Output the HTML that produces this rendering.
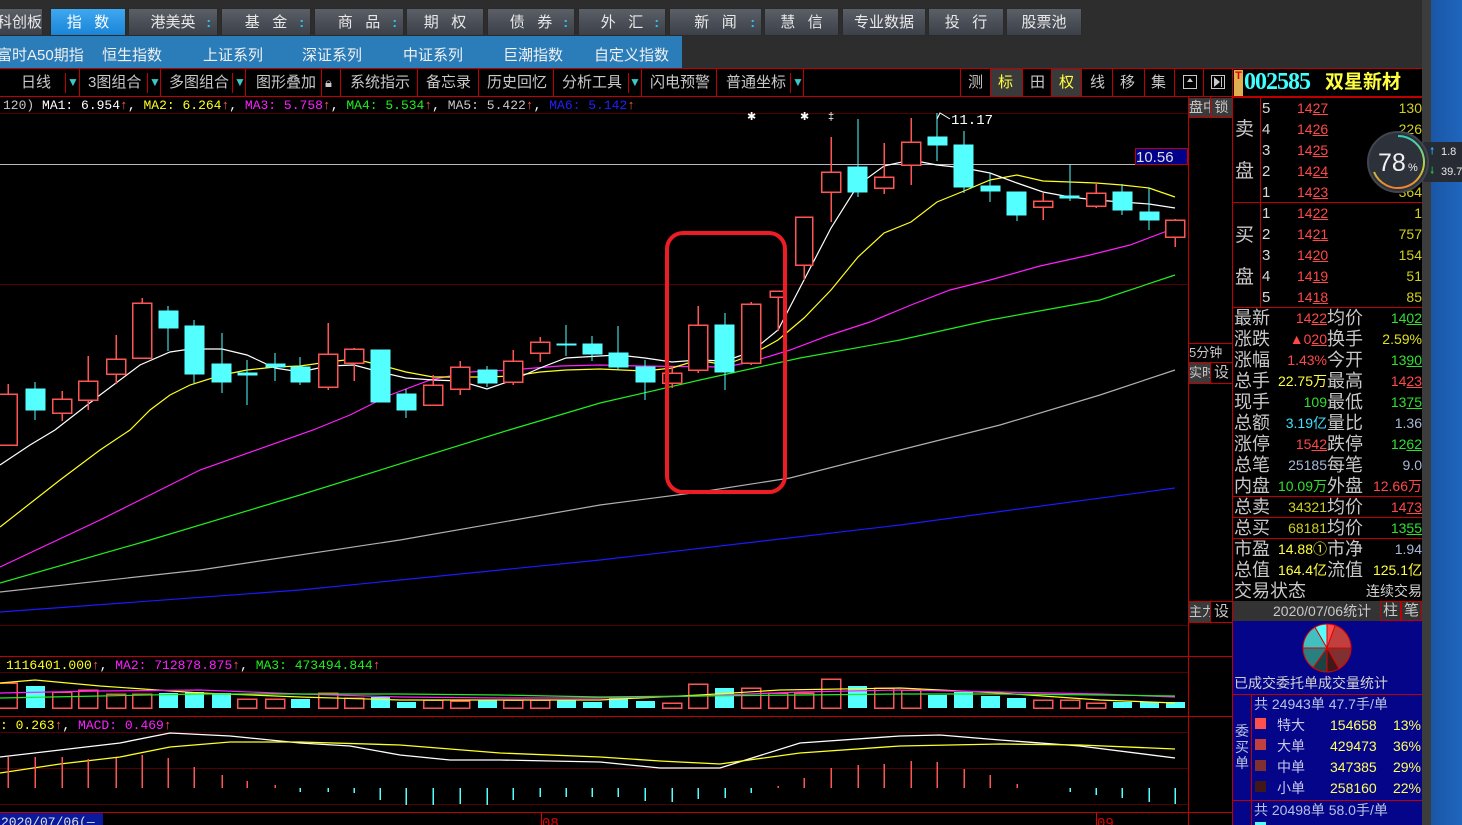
<!DOCTYPE html>
<html><head><meta charset="utf-8"><style>
*{margin:0;padding:0;box-sizing:border-box}
body{width:1462px;height:825px;overflow:hidden;background:#000;position:relative;font-family:"Liberation Sans","WenQuanYi Zen Hei","Noto Sans CJK SC",sans-serif;color:#c8c8c8}
.a{position:absolute;white-space:nowrap}
.tab{position:absolute;top:8px;height:28px;background:linear-gradient(#5a5f68,#3c4048);border:1px solid #2a2a2a;color:#e8e8e8;font-size:15px;line-height:27px;text-align:center}
.tab i{position:absolute;right:6px;top:0px;color:#2ac8ff;font-style:normal;font-weight:bold;font-size:14px}
.r2{position:absolute;top:44px;color:#f0f0f0;font-size:15px}
.tb{position:absolute;top:68px;height:29px;line-height:29px;font-size:15px;color:#c8c8c8}
.vl{position:absolute;width:1px;background:#c00000}
.ob{position:absolute;height:21px;line-height:21px;font-size:14px}
.cn{font-size:18px;color:#c8c8c8}
.row{position:absolute;left:1234px;width:188px;height:21px;line-height:21px}
.row span{position:absolute}
</style></head><body>
<div class="a" style="left:0;top:0;width:1422px;height:68px;background:#2d2d2d"></div>
<div class="a" style="left:1422px;top:0;width:9px;height:825px;background:#3c3c3c"></div>
<div class="a" style="left:1431px;top:0;width:31px;height:825px;background:linear-gradient(90deg,#1a56a6,#1f66bd)"></div>
<div class="tab" style="left:-4px;width:47px">科创板</div>
<div class="tab" style="left:50px;width:76px;background:linear-gradient(#3ea8f0,#1a84d8);color:#fff">指&nbsp;&nbsp;&nbsp;数</div>
<div class="tab" style="left:128px;width:90px">港美英<i>:</i></div>
<div class="tab" style="left:221px;width:90px">基&nbsp;&nbsp;&nbsp;金<i>:</i></div>
<div class="tab" style="left:314px;width:90px">商&nbsp;&nbsp;&nbsp;品<i>:</i></div>
<div class="tab" style="left:406px;width:78px">期&nbsp;&nbsp;&nbsp;权</div>
<div class="tab" style="left:487px;width:88px">债&nbsp;&nbsp;&nbsp;券<i>:</i></div>
<div class="tab" style="left:578px;width:88px">外&nbsp;&nbsp;&nbsp;汇<i>:</i></div>
<div class="tab" style="left:669px;width:93px">新&nbsp;&nbsp;&nbsp;闻<i>:</i></div>
<div class="tab" style="left:764px;width:75px">慧&nbsp;&nbsp;&nbsp;信</div>
<div class="tab" style="left:842px;width:84px">专业数据</div>
<div class="tab" style="left:928px;width:76px">投&nbsp;&nbsp;&nbsp;行</div>
<div class="tab" style="left:1006px;width:76px">股票池</div>
<div class="a" style="left:0;top:36px;width:682px;height:32px;background:#2b7dba"></div>
<div class="r2" style="left:-3px">富时A50期指</div>
<div class="r2" style="left:102px">恒生指数</div>
<div class="r2" style="left:203px">上证系列</div>
<div class="r2" style="left:302px">深证系列</div>
<div class="r2" style="left:403px">中证系列</div>
<div class="r2" style="left:503px">巨潮指数</div>
<div class="r2" style="left:594px">自定义指数</div>
<div class="a" style="left:0;top:68px;width:1422px;height:1px;background:#c00000"></div>
<div class="a" style="left:0;top:96px;width:1422px;height:1px;background:#c00000"></div>
<div class="tb" style="left:21px">日线</div><div class="tb" style="left:67px;color:#3cc8c8;font-size:12px">▼</div>
<div class="tb" style="left:88px">3图组合</div><div class="tb" style="left:149px;color:#3cc8c8;font-size:12px">▼</div>
<div class="tb" style="left:169px">多图组合</div><div class="tb" style="left:234px;color:#3cc8c8;font-size:12px">▼</div>
<div class="tb" style="left:256px">图形叠加</div><div class="tb" style="left:325px;font-size:13px">🔒︎</div>
<div class="tb" style="left:350px">系统指示</div>
<div class="tb" style="left:426px">备忘录</div>
<div class="tb" style="left:487px">历史回忆</div>
<div class="tb" style="left:562px">分析工具</div><div class="tb" style="left:629px;color:#3cc8c8;font-size:12px">▼</div>
<div class="tb" style="left:650px">闪电预警</div>
<div class="tb" style="left:726px">普通坐标</div><div class="tb" style="left:792px;color:#3cc8c8;font-size:12px">▼</div>
<div class="a" style="left:991px;top:69px;width:31px;height:27px;background:#3a3a3a"></div>
<div class="a" style="left:1052px;top:69px;width:29px;height:27px;background:#3a3a3a"></div>
<div class="tb" style="left:968px">测</div>
<div class="tb" style="left:998px;color:#ffff40">标</div>
<div class="tb" style="left:1030px">田</div>
<div class="tb" style="left:1059px;color:#ffff40">权</div>
<div class="tb" style="left:1090px">线</div>
<div class="tb" style="left:1120px">移</div>
<div class="tb" style="left:1151px">集</div>
<div class="a" style="left:1183px;top:75px;width:14px;height:14px;border:1px solid #c8c8c8"></div>
<div class="a" style="left:1187px;top:78px;width:0;height:0;border:3px solid transparent;border-bottom:4px solid #c8c8c8;border-top:0"></div>
<div class="a" style="left:1211px;top:75px;width:14px;height:14px;border:1px solid #c8c8c8"></div>
<div class="a" style="left:1214px;top:77px;width:0;height:0;border-top:5px solid transparent;border-bottom:5px solid transparent;border-left:6px solid #c8c8c8"></div>
<div class="a" style="left:1221px;top:77px;width:1px;height:10px;background:#c8c8c8"></div>
<div class="vl" style="left:65px;top:73px;height:20px"></div><div class="vl" style="left:147px;top:73px;height:20px"></div><div class="vl" style="left:232px;top:73px;height:20px"></div><div class="vl" style="left:628px;top:73px;height:20px"></div><div class="vl" style="left:790px;top:73px;height:20px"></div>
<div class="vl" style="left:79px;top:69px;height:27px"></div><div class="vl" style="left:160px;top:69px;height:27px"></div>
<div class="vl" style="left:245px;top:69px;height:27px"></div><div class="vl" style="left:321px;top:69px;height:27px"></div>
<div class="vl" style="left:340px;top:69px;height:27px"></div><div class="vl" style="left:417px;top:69px;height:27px"></div>
<div class="vl" style="left:478px;top:69px;height:27px"></div><div class="vl" style="left:553px;top:69px;height:27px"></div>
<div class="vl" style="left:641px;top:69px;height:27px"></div><div class="vl" style="left:716px;top:69px;height:27px"></div>
<div class="vl" style="left:803px;top:69px;height:27px"></div><div class="vl" style="left:960px;top:69px;height:27px"></div>
<div class="vl" style="left:990px;top:69px;height:27px"></div><div class="vl" style="left:1022px;top:69px;height:27px"></div>
<div class="vl" style="left:1051px;top:69px;height:27px"></div><div class="vl" style="left:1081px;top:69px;height:27px"></div>
<div class="vl" style="left:1112px;top:69px;height:27px"></div><div class="vl" style="left:1144px;top:69px;height:27px"></div>
<div class="vl" style="left:1174px;top:69px;height:27px"></div><div class="vl" style="left:1203px;top:69px;height:27px"></div>
<div class="vl" style="left:1232px;top:69px;height:756px"></div>
<div class="a" style="left:1234px;top:70px;width:9px;height:26px;background:#e0b050;color:#e00000;font-size:11px;font-weight:bold;text-align:center;line-height:12px">T</div>
<div class="a" style="left:1244px;top:68px;font-family:'Liberation Serif',serif;font-weight:bold;font-size:24px;color:#40ffff;line-height:29px;letter-spacing:-1px">002585</div>
<div class="a" style="left:1325px;top:68px;font-size:19px;color:#ffff40;line-height:29px;font-weight:bold">双星新材</div>

<svg class="a" style="left:0;top:0" width="1462" height="825">
<g shape-rendering="crispEdges">
<line x1="0" y1="113.5" x2="1188" y2="113.5" stroke="#500000"/>
<line x1="0" y1="284.5" x2="1188" y2="284.5" stroke="#500000"/>
<line x1="0" y1="164.5" x2="1188" y2="164.5" stroke="#b8b8b8"/>
<line x1="0" y1="625.5" x2="1188" y2="625.5" stroke="#500000"/>
<line x1="0" y1="656.5" x2="1232" y2="656.5" stroke="#c00000"/>
<line x1="0" y1="672.5" x2="1188" y2="672.5" stroke="#500000"/>
<line x1="0" y1="716.5" x2="1232" y2="716.5" stroke="#c00000"/>
<line x1="0" y1="732.5" x2="1188" y2="732.5" stroke="#500000"/>
<line x1="0" y1="768.5" x2="1188" y2="768.5" stroke="#500000"/>
<line x1="0" y1="804.5" x2="1188" y2="804.5" stroke="#500000"/>
<line x1="0" y1="812.5" x2="1232" y2="812.5" stroke="#c00000"/>
<line x1="1188.5" y1="97" x2="1188.5" y2="825" stroke="#c00000"/>
</g>
<g fill="none" stroke-width="1.2">
<polyline stroke="#1a1aff" points="0,612 300,590 600,560 900,525 1175,488"/>
<polyline stroke="#b0b0b0" points="0,592 200,570 400,540 600,505 700,492 790,478 900,450 1000,425 1100,395 1175,370"/>
<polyline stroke="#20ee20" points="0,583 150,540 300,495 509,430 600,403 700,380 800,358 900,340 990,320 1100,300 1175,275"/>
<polyline stroke="#ff20ff" points="0,567 100,520 200,470 313,430 350,415 390,395 430,380 470,372 510,370 560,366 600,365 640,366 725,367 751,362 790,350 830,335 870,322 911,305 950,290 990,280 1040,266 1090,255 1130,245 1175,228"/>
<polyline stroke="#ffff20" points="0,527 60,480 100,450 130,430 150,410 170,395 190,385 222,375 247,370 275,367 300,366 328,362 354,359 380,365 406,372 433,377 487,377 513,376 540,372 566,370 600,369 645,371 672,368 698,360 725,365 751,355 778,340 804,318 831,290 858,257 884,233 911,222 937,202 964,191 990,180 1017,175 1043,181 1070,182 1096,183 1122,185 1149,188 1175,197"/>
<polyline stroke="#ffffff" points="0,465 30,445 55,430 100,395 140,365 170,352 190,349 222,349 247,355 275,368 300,372 328,366 354,365 380,372 406,378 433,380 460,381 487,389 513,380 540,368 566,358 600,356 618,355 645,358 672,362 698,360 725,361 751,352 778,330 804,280 831,228 858,185 884,166 911,160 937,165 964,168 990,173 1017,183 1043,192 1070,197 1096,200 1122,202 1149,204 1175,208"/>
</g>
<g shape-rendering="crispEdges" stroke-width="1.5">
<g stroke="#ff5454" fill="#000">
<line x1="8" y1="384" x2="8" y2="445"/><rect x="-2" y="394" width="19" height="51"/>
<line x1="62" y1="391" x2="62" y2="421"/><rect x="52.5" y="399" width="19" height="14"/>
<line x1="88" y1="356" x2="88" y2="410"/><rect x="78.5" y="381" width="19" height="19"/>
<line x1="116" y1="335" x2="116" y2="384"/><rect x="106.5" y="359" width="19" height="15"/>
<line x1="142" y1="298" x2="142" y2="358"/><rect x="132.5" y="303" width="19" height="55"/>
<line x1="328" y1="323" x2="328" y2="390"/><rect x="318.5" y="354" width="19" height="33"/>
<line x1="354" y1="348" x2="354" y2="381"/><rect x="344.5" y="349" width="19" height="14"/>
<line x1="433" y1="375" x2="433" y2="405"/><rect x="423.5" y="385" width="19" height="20"/>
<line x1="460" y1="361" x2="460" y2="395"/><rect x="450.5" y="367" width="19" height="22"/>
<line x1="513" y1="350" x2="513" y2="385"/><rect x="503.5" y="361" width="19" height="21"/>
<line x1="540" y1="337" x2="540" y2="362"/><rect x="530.5" y="342" width="19" height="11"/>
<line x1="672" y1="366" x2="672" y2="388"/><rect x="662.5" y="373" width="19" height="10"/>
<line x1="698" y1="306" x2="698" y2="373"/><rect x="688.5" y="325" width="19" height="45"/>
<line x1="751" y1="302" x2="751" y2="365"/><rect x="741.5" y="304" width="19" height="59"/>
<line x1="778" y1="291" x2="778" y2="331"/><rect x="770" y="291" width="16" height="6"/>
<line x1="804" y1="217" x2="804" y2="280"/><rect x="795.5" y="217" width="17" height="48"/>
<line x1="831" y1="137" x2="831" y2="222"/><rect x="821.5" y="172" width="19" height="20"/>
<line x1="884" y1="143" x2="884" y2="194"/><rect x="874.5" y="177" width="19" height="11"/>
<line x1="911" y1="118" x2="911" y2="185"/><rect x="901.5" y="142" width="19" height="23"/>
<line x1="1043" y1="193" x2="1043" y2="220"/><rect x="1033.5" y="201" width="19" height="6"/>
<line x1="1096" y1="183" x2="1096" y2="208"/><rect x="1086.5" y="193" width="19" height="13"/>
<line x1="1175" y1="219" x2="1175" y2="247"/><rect x="1165.5" y="220" width="19" height="17"/>
</g>
<g stroke="#54ffff" fill="#54ffff" stroke-width="1">
<line x1="35" y1="382" x2="35" y2="420"/><rect x="26" y="389" width="19" height="21"/>
<line x1="168" y1="306" x2="168" y2="351"/><rect x="159" y="311" width="19" height="17"/>
<line x1="194" y1="320" x2="194" y2="383"/><rect x="185" y="326" width="19" height="48"/>
<line x1="222" y1="333" x2="222" y2="393"/><rect x="212" y="364" width="19" height="18"/>
<line x1="247" y1="360" x2="247" y2="405"/><rect x="238" y="373" width="19" height="2"/>
<line x1="275" y1="353" x2="275" y2="381"/><rect x="266" y="364" width="19" height="3"/>
<line x1="300" y1="357" x2="300" y2="385"/><rect x="291" y="367" width="19" height="15"/>
<line x1="380" y1="350" x2="380" y2="402"/><rect x="371" y="350" width="19" height="52"/>
<line x1="406" y1="389" x2="406" y2="418"/><rect x="397" y="394" width="19" height="16"/>
<line x1="487" y1="366" x2="487" y2="387"/><rect x="478" y="370" width="19" height="13"/>
<line x1="566" y1="325" x2="566" y2="356"/><rect x="557" y="344" width="19" height="1"/>
<line x1="592" y1="336" x2="592" y2="361"/><rect x="583" y="344" width="19" height="10"/>
<line x1="618" y1="326" x2="618" y2="370"/><rect x="609" y="353" width="19" height="14"/>
<line x1="645" y1="360" x2="645" y2="400"/><rect x="636" y="367" width="19" height="15"/>
<line x1="725" y1="313" x2="725" y2="390"/><rect x="715" y="325" width="19" height="47"/>
<line x1="858" y1="119" x2="858" y2="197"/><rect x="848" y="167" width="19" height="25"/>
<line x1="937" y1="113" x2="937" y2="161"/><rect x="928" y="137" width="19" height="8"/>
<line x1="964" y1="131" x2="964" y2="193"/><rect x="954" y="145" width="19" height="42"/>
<line x1="990" y1="173" x2="990" y2="202"/><rect x="981" y="186" width="19" height="5"/>
<line x1="1017" y1="192" x2="1017" y2="221"/><rect x="1007" y="192" width="19" height="23"/>
<line x1="1070" y1="164" x2="1070" y2="201"/><rect x="1060" y="196" width="19" height="2"/>
<line x1="1122" y1="184" x2="1122" y2="215"/><rect x="1113" y="192" width="19" height="18"/>
<line x1="1149" y1="188" x2="1149" y2="230"/><rect x="1140" y="212" width="19" height="8"/>
</g>
</g>
<rect x="667" y="233" width="118" height="259" rx="16" fill="none" stroke="#ee1c24" stroke-width="4"/>
<polyline points="937,119 940,113 950,119" fill="none" stroke="#fff"/>
<text x="951" y="124" fill="#fff" font-family="Liberation Mono,monospace" font-size="14">11.17</text>
<text x="747" y="120" fill="#fff" font-size="11">✱</text>
<text x="800" y="120" fill="#fff" font-size="11">✱</text>
<text x="828" y="120" fill="#fff" font-size="11">‡</text>
<g shape-rendering="crispEdges">
<g fill="none" stroke="#ff5454" stroke-width="1.5">
<rect x="-2" y="683" width="19" height="25"/><rect x="52.5" y="692" width="19" height="16"/><rect x="78.5" y="690" width="19" height="18"/><rect x="106.5" y="694" width="19" height="14"/><rect x="132.5" y="694" width="19" height="14"/>
<rect x="237.5" y="699" width="19" height="9"/><rect x="265.5" y="699" width="19" height="9"/><rect x="318.5" y="693" width="19" height="15"/><rect x="344.5" y="698" width="19" height="10"/>
<rect x="423.5" y="700" width="19" height="8"/><rect x="450.5" y="701" width="19" height="7"/><rect x="503.5" y="700" width="19" height="8"/><rect x="530.5" y="700" width="19" height="8"/>
<rect x="662.5" y="703" width="19" height="5"/><rect x="688.5" y="684" width="19" height="24"/><rect x="741.5" y="688" width="19" height="20"/><rect x="768.5" y="693" width="19" height="15"/><rect x="794.5" y="693" width="19" height="15"/><rect x="821.5" y="679" width="19" height="29"/>
<rect x="874.5" y="688" width="19" height="20"/><rect x="901.5" y="690" width="19" height="18"/><rect x="1033.5" y="700" width="19" height="8"/><rect x="1060.5" y="700" width="19" height="8"/><rect x="1086.5" y="703" width="19" height="5"/>
</g>
<g fill="#54ffff">
<rect x="26" y="686" width="19" height="22"/><rect x="159" y="693" width="19" height="15"/><rect x="185" y="692" width="19" height="16"/><rect x="212" y="693" width="19" height="15"/>
<rect x="291" y="699" width="19" height="9"/><rect x="371" y="697" width="19" height="11"/><rect x="397" y="702" width="19" height="6"/><rect x="478" y="700" width="19" height="8"/>
<rect x="557" y="700" width="19" height="8"/><rect x="583" y="702" width="19" height="6"/><rect x="609" y="697" width="19" height="11"/><rect x="636" y="701" width="19" height="7"/>
<rect x="715" y="688" width="19" height="20"/><rect x="848" y="686" width="19" height="22"/><rect x="928" y="695" width="19" height="13"/><rect x="954" y="692" width="19" height="16"/>
<rect x="981" y="696" width="19" height="12"/><rect x="1007" y="698" width="19" height="10"/><rect x="1113" y="702" width="19" height="6"/><rect x="1140" y="702" width="19" height="6"/><rect x="1166" y="702" width="19" height="6"/>
</g>
</g>
<g fill="none" stroke-width="1.2">
<polyline stroke="#ffff20" points="0,683 35,680 100,686 200,693 300,697 400,700 500,700 600,700 700,695 780,690 900,688 1000,693 1100,700 1175,703"/>
<polyline stroke="#ff20ff" points="0,693 100,691 200,690 300,694 400,697 500,698 600,698 700,696 800,692 900,690 1000,692 1100,694 1175,697"/>
<polyline stroke="#20ee20" points="0,698 100,696 200,694 300,694 400,694 500,695 600,697 700,696 800,695 900,694 1000,694 1100,695 1175,696"/>
</g>
<g fill="none" stroke-width="1.3">
<polyline stroke="#ffffff" points="0,757 60,750 120,743 170,733 230,736 300,743 350,746 400,755 450,760 500,760 600,762 660,768 720,768 800,743 900,736 940,735 1000,740 1080,746 1175,758"/>
<polyline stroke="#ffff20" points="0,773 60,764 120,757 170,747 230,742 300,742 400,745 500,753 600,757 660,761 720,764 800,753 900,746 1000,744 1080,745 1175,749"/>
</g>
<g stroke-width="1.5" shape-rendering="crispEdges">
<g stroke="#ff5454">
<line x1="8" y1="757" x2="8" y2="788"/><line x1="35" y1="757" x2="35" y2="788"/><line x1="62" y1="757" x2="62" y2="788"/><line x1="88" y1="759" x2="88" y2="788"/><line x1="116" y1="758" x2="116" y2="788"/><line x1="142" y1="755" x2="142" y2="788"/><line x1="168" y1="758" x2="168" y2="788"/><line x1="194" y1="767" x2="194" y2="788"/><line x1="222" y1="775" x2="222" y2="788"/><line x1="247" y1="781" x2="247" y2="788"/><line x1="275" y1="785" x2="275" y2="788"/>
<line x1="778" y1="786" x2="778" y2="788"/><line x1="804" y1="778" x2="804" y2="788"/><line x1="831" y1="768" x2="831" y2="788"/><line x1="858" y1="765" x2="858" y2="788"/><line x1="884" y1="764" x2="884" y2="788"/><line x1="911" y1="761" x2="911" y2="788"/><line x1="937" y1="762" x2="937" y2="788"/><line x1="964" y1="769" x2="964" y2="788"/><line x1="990" y1="775" x2="990" y2="788"/><line x1="1017" y1="784" x2="1017" y2="788"/>
</g>
<g stroke="#54ffff">
<line x1="300" y1="788" x2="300" y2="792"/><line x1="328" y1="788" x2="328" y2="792"/><line x1="354" y1="788" x2="354" y2="793"/><line x1="380" y1="788" x2="380" y2="800"/><line x1="406" y1="788" x2="406" y2="805"/><line x1="433" y1="788" x2="433" y2="805"/><line x1="460" y1="788" x2="460" y2="804"/><line x1="487" y1="788" x2="487" y2="805"/><line x1="513" y1="788" x2="513" y2="800"/><line x1="540" y1="788" x2="540" y2="797"/><line x1="566" y1="788" x2="566" y2="797"/><line x1="592" y1="788" x2="592" y2="797"/><line x1="618" y1="788" x2="618" y2="797"/><line x1="645" y1="788" x2="645" y2="801"/><line x1="672" y1="788" x2="672" y2="802"/><line x1="698" y1="788" x2="698" y2="799"/><line x1="725" y1="788" x2="725" y2="798"/><line x1="751" y1="788" x2="751" y2="793"/>
<line x1="1070" y1="788" x2="1070" y2="792"/><line x1="1096" y1="788" x2="1096" y2="795"/><line x1="1122" y1="788" x2="1122" y2="798"/><line x1="1149" y1="788" x2="1149" y2="802"/><line x1="1175" y1="788" x2="1175" y2="804"/>
</g>
</g>
<g font-family="Liberation Mono,monospace" font-size="13">
<text x="3" y="109"><tspan fill="#c8c8c8">120)</tspan><tspan fill="#fff"> MA1: 6.954</tspan><tspan fill="#ff5454">↑</tspan><tspan fill="#fff">, </tspan><tspan fill="#ffff20">MA2: 6.264</tspan><tspan fill="#ff5454">↑</tspan><tspan fill="#fff">, </tspan><tspan fill="#ff20ff">MA3: 5.758</tspan><tspan fill="#ff5454">↑</tspan><tspan fill="#fff">, </tspan><tspan fill="#20ee20">MA4: 5.534</tspan><tspan fill="#ff5454">↑</tspan><tspan fill="#fff">, </tspan><tspan fill="#c8c8c8">MA5: 5.422</tspan><tspan fill="#ff5454">↑</tspan><tspan fill="#fff">, </tspan><tspan fill="#2020ff">MA6: 5.142</tspan><tspan fill="#ff5454">↑</tspan></text>
<text x="6" y="669"><tspan fill="#ffff20">1116401.000</tspan><tspan fill="#ff5454">↑</tspan><tspan fill="#fff">, </tspan><tspan fill="#ff20ff">MA2: 712878.875</tspan><tspan fill="#ff5454">↑</tspan><tspan fill="#fff">, </tspan><tspan fill="#20ee20">MA3: 473494.844</tspan><tspan fill="#ff5454">↑</tspan></text>
<text x="0" y="729"><tspan fill="#ffff20">: 0.263</tspan><tspan fill="#ff5454">↑</tspan><tspan fill="#fff">, </tspan><tspan fill="#ff20ff">MACD: 0.469</tspan><tspan fill="#ff5454">↑</tspan></text>
</g>
<rect x="1135.5" y="148.5" width="52" height="16" fill="#00008b" stroke="#c00000"/>
<text x="1136" y="162" fill="#e0e0e0" font-family="Liberation Sans,sans-serif" font-size="15">10.56</text>
<rect x="0" y="813" width="103" height="12" fill="#0a1a9a"/>
<text x="1" y="826" fill="#e0e0e0" font-family="Liberation Mono,monospace" font-size="13">2020/07/06(—</text>
<line x1="541.5" y1="813" x2="541.5" y2="825" stroke="#e00000"/>
<text x="542" y="827" fill="#e00000" font-family="Liberation Mono,monospace" font-size="14">08</text>
<line x1="1096.5" y1="813" x2="1096.5" y2="825" stroke="#e00000"/>
<text x="1097" y="827" fill="#e00000" font-family="Liberation Mono,monospace" font-size="14">09</text>
<g stroke="#c00000" shape-rendering="crispEdges">
<line x1="1233" y1="97.5" x2="1422" y2="97.5"/>
<line x1="1233" y1="202.5" x2="1422" y2="202.5"/>
<line x1="1233" y1="307.5" x2="1422" y2="307.5"/>
<line x1="1260.5" y1="97" x2="1260.5" y2="307"/>
<line x1="1233" y1="496.5" x2="1422" y2="496.5"/>
<line x1="1233" y1="517.5" x2="1422" y2="517.5"/>
<line x1="1233" y1="538.5" x2="1422" y2="538.5"/>
<line x1="1188" y1="117.5" x2="1232" y2="117.5"/>
<line x1="1188" y1="343.5" x2="1232" y2="343.5"/>
<line x1="1188" y1="362.5" x2="1232" y2="362.5"/>
<line x1="1188" y1="383.5" x2="1232" y2="383.5"/>
<line x1="1188" y1="601.5" x2="1232" y2="601.5"/>
<line x1="1188" y1="622.5" x2="1232" y2="622.5"/>
<line x1="1210.5" y1="97" x2="1210.5" y2="117"/>
<line x1="1210.5" y1="362" x2="1210.5" y2="383"/>
<line x1="1210.5" y1="601" x2="1210.5" y2="622"/>
</g>
</svg>

<div class="a" style="left:1189px;top:98px;width:21px;height:19px;background:#3a3a3a;font-size:14px;line-height:19px;overflow:hidden">盘中</div>
<div class="a" style="left:1211px;top:98px;width:21px;height:19px;background:#3a3a3a;font-size:14px;line-height:19px;text-align:center">锁</div>
<div class="a" style="left:1189px;top:344px;font-size:13px;line-height:18px">5分钟</div>
<div class="a" style="left:1189px;top:363px;width:21px;height:20px;background:#3a3a3a;font-size:13px;line-height:20px;overflow:hidden">实时</div>
<div class="a" style="left:1211px;top:363px;width:21px;height:20px;font-size:15px;line-height:20px;text-align:center">设</div>
<div class="a" style="left:1189px;top:602px;width:21px;height:20px;background:#3a3a3a;font-size:13px;line-height:20px;overflow:hidden">主力</div>
<div class="a" style="left:1211px;top:602px;width:21px;height:20px;font-size:15px;line-height:20px;text-align:center">设</div>

<div class="a cn" style="left:1235px;top:118px;font-size:19px;line-height:24px">卖</div>
<div class="a cn" style="left:1235px;top:160px;font-size:19px;line-height:24px">盘</div>
<div class="a cn" style="left:1235px;top:224px;font-size:19px;line-height:24px">买</div>
<div class="a cn" style="left:1235px;top:266px;font-size:19px;line-height:24px">盘</div>
<div class="ob" style="left:1262px;top:98px;color:#d8d8d8;font-size:15px">5</div>
<div class="ob" style="left:1262px;top:119px;color:#d8d8d8;font-size:15px">4</div>
<div class="ob" style="left:1262px;top:140px;color:#d8d8d8;font-size:15px">3</div>
<div class="ob" style="left:1262px;top:161px;color:#d8d8d8;font-size:15px">2</div>
<div class="ob" style="left:1262px;top:182px;color:#d8d8d8;font-size:15px">1</div>
<div class="ob" style="left:1262px;top:203px;color:#d8d8d8;font-size:15px">1</div>
<div class="ob" style="left:1262px;top:224px;color:#d8d8d8;font-size:15px">2</div>
<div class="ob" style="left:1262px;top:245px;color:#d8d8d8;font-size:15px">3</div>
<div class="ob" style="left:1262px;top:266px;color:#d8d8d8;font-size:15px">4</div>
<div class="ob" style="left:1262px;top:287px;color:#d8d8d8;font-size:15px">5</div>
<div class="ob" style="left:1297px;top:98px;color:#ff4848">14<u>27</u></div>
<div class="ob" style="left:1297px;top:119px;color:#ff4848">14<u>26</u></div>
<div class="ob" style="left:1297px;top:140px;color:#ff4848">14<u>25</u></div>
<div class="ob" style="left:1297px;top:161px;color:#ff4848">14<u>24</u></div>
<div class="ob" style="left:1297px;top:182px;color:#ff4848">14<u>23</u></div>
<div class="ob" style="left:1297px;top:203px;color:#ff4848">14<u>22</u></div>
<div class="ob" style="left:1297px;top:224px;color:#ff4848">14<u>21</u></div>
<div class="ob" style="left:1297px;top:245px;color:#ff4848">14<u>20</u></div>
<div class="ob" style="left:1297px;top:266px;color:#ff4848">14<u>19</u></div>
<div class="ob" style="left:1297px;top:287px;color:#ff4848">14<u>18</u></div>
<div class="ob" style="right:40px;top:98px;color:#d0d020">130</div>
<div class="ob" style="right:40px;top:119px;color:#d0d020">226</div>
<div class="ob" style="right:40px;top:140px;color:#d0d020">477</div>
<div class="ob" style="right:40px;top:161px;color:#d0d020">390</div>
<div class="ob" style="right:40px;top:182px;color:#d0d020">364</div>
<div class="ob" style="right:40px;top:203px;color:#d0d020">1</div>
<div class="ob" style="right:40px;top:224px;color:#d0d020">757</div>
<div class="ob" style="right:40px;top:245px;color:#d0d020">154</div>
<div class="ob" style="right:40px;top:266px;color:#d0d020">51</div>
<div class="ob" style="right:40px;top:287px;color:#d0d020">85</div>

<div style="position:absolute;left:0;top:0;font-size:14px">
<div class="row" style="top:308px"><span class="cn" style="left:0">最新</span><span style="right:95px;color:#ff4848">14<u>22</u></span><span class="cn" style="left:93px">均价</span><span style="right:0;color:#30e030">14<u>02</u></span></div>
<div class="row" style="top:329px"><span class="cn" style="left:0">涨跌</span><span style="right:95px;color:#ff4848">▲0<u>20</u></span><span class="cn" style="left:93px">换手</span><span style="right:0;color:#e0e020">2.59%</span></div>
<div class="row" style="top:350px"><span class="cn" style="left:0">涨幅</span><span style="right:95px;color:#ff4848">1.43%</span><span class="cn" style="left:93px">今开</span><span style="right:0;color:#30e030">13<u>90</u></span></div>
<div class="row" style="top:371px"><span class="cn" style="left:0">总手</span><span style="right:95px;color:#ffff40">22.75万</span><span class="cn" style="left:93px">最高</span><span style="right:0;color:#ff4848">14<u>23</u></span></div>
<div class="row" style="top:392px"><span class="cn" style="left:0">现手</span><span style="right:95px;color:#30e030">109</span><span class="cn" style="left:93px">最低</span><span style="right:0;color:#30e030">13<u>75</u></span></div>
<div class="row" style="top:413px"><span class="cn" style="left:0">总额</span><span style="right:95px;color:#40e0ff">3.19亿</span><span class="cn" style="left:93px">量比</span><span style="right:0;color:#a8b8d8">1.36</span></div>
<div class="row" style="top:434px"><span class="cn" style="left:0">涨停</span><span style="right:95px;color:#ff4848">15<u>42</u></span><span class="cn" style="left:93px">跌停</span><span style="right:0;color:#30e030">12<u>62</u></span></div>
<div class="row" style="top:455px"><span class="cn" style="left:0">总笔</span><span style="right:95px;color:#a8b8d8">25185</span><span class="cn" style="left:93px">每笔</span><span style="right:0;color:#a8b8d8">9.0</span></div>
<div class="row" style="top:476px"><span class="cn" style="left:0">内盘</span><span style="right:95px;color:#30e030">10.09万</span><span class="cn" style="left:93px">外盘</span><span style="right:0;color:#ff4848">12.66万</span></div>
<div class="row" style="top:497px"><span class="cn" style="left:0">总卖</span><span style="right:95px;color:#d0d020">34321</span><span class="cn" style="left:93px">均价</span><span style="right:0;color:#ff4848">14<u>73</u></span></div>
<div class="row" style="top:518px"><span class="cn" style="left:0">总买</span><span style="right:95px;color:#d0d020">68181</span><span class="cn" style="left:93px">均价</span><span style="right:0;color:#30e030">13<u>55</u></span></div>
<div class="row" style="top:539px"><span class="cn" style="left:0">市盈</span><span style="right:95px;color:#ffff40">14.88①</span><span class="cn" style="left:93px">市净</span><span style="right:0;color:#a8b8d8">1.94</span></div>
<div class="row" style="top:560px"><span class="cn" style="left:0">总值</span><span style="right:95px;color:#ffff40">164.4亿</span><span class="cn" style="left:93px">流值</span><span style="right:0;color:#ffff40">125.1亿</span></div>
<div class="row" style="top:581px"><span class="cn" style="left:0">交易状态</span><span style="right:0;color:#d0d0d0">连续交易</span></div>
</div>
<div class="a" style="left:1233px;top:601px;width:189px;height:20px;background:#333"></div>
<div class="a" style="left:1273px;top:601px;font-size:14px;line-height:20px;color:#c8c8c8">2020/07/06统计</div>
<div class="a" style="left:1380px;top:601px;width:21px;height:20px;border:1px solid #c00000;font-size:15px;line-height:18px;text-align:center">柱</div>
<div class="a" style="left:1401px;top:601px;width:21px;height:20px;border:1px solid #c00000;font-size:15px;line-height:18px;text-align:center">笔</div>
<div class="a" style="left:1233px;top:621px;width:189px;height:204px;background:#05058a"></div>
<svg class="a" style="left:0;top:0" width="1462" height="825">
<g stroke="#e00000" stroke-width="1">
<path d="M1327,648 L1327,624 A24,24 0 0 1 1335.2,625.4Z" fill="#ff5050"/>
<path d="M1327,648 L1335.2,625.4 A24,24 0 0 1 1351,648Z" fill="#c04040"/>
<path d="M1327,648 L1351,648 A24,24 0 0 1 1339,668.8Z" fill="#803030"/>
<path d="M1327,648 L1339,668.8 A24,24 0 0 1 1327,672Z" fill="#401818"/>
<path d="M1327,648 L1327,672 A24,24 0 0 1 1313.2,667.7Z" fill="#1a4444"/>
<path d="M1327,648 L1313.2,667.7 A24,24 0 0 1 1303,648Z" fill="#2a8080"/>
<path d="M1327,648 L1303,648 A24,24 0 0 1 1315,627.2Z" fill="#40c0c0"/>
<path d="M1327,648 L1315,627.2 A24,24 0 0 1 1327,624Z" fill="#55ffff"/>
</g>
<g stroke="#c00000" shape-rendering="crispEdges">
<line x1="1233" y1="694.5" x2="1422" y2="694.5"/>
<line x1="1233" y1="800.5" x2="1422" y2="800.5"/>
<line x1="1251.5" y1="695" x2="1251.5" y2="825"/>
</g>
<rect x="1255" y="718" width="11" height="11" fill="#ff5050"/>
<rect x="1255" y="739" width="11" height="11" fill="#c04040"/>
<rect x="1255" y="760" width="11" height="11" fill="#803030"/>
<rect x="1255" y="781" width="11" height="11" fill="#401818"/>
<rect x="1255" y="822" width="11" height="3" fill="#55ffff"/>
</svg>
<div class="a" style="left:1234px;top:674px;font-size:14px;line-height:18px;color:#d0d0d0">已成交委托单成交量统计</div>
<div class="a" style="left:1254px;top:695px;font-size:14px;line-height:19px;color:#b8c0e0">共 24943单 47.7手/单</div>
<div class="a" style="left:1235px;top:723px;width:14px;font-size:14px;line-height:16px;color:#b8c0e0;white-space:normal">委买单</div>
<div class="a" style="left:1277px;top:715px;font-size:14px;line-height:21px;color:#c8c8e8">特大<br>大单<br>中单<br>小单</div>
<div class="a" style="left:1330px;top:715px;font-size:14px;line-height:21px;color:#ffff60">154658<br>429473<br>347385<br>258160</div>
<div class="a" style="right:41px;top:715px;font-size:14px;line-height:21px;color:#ffff60;text-align:right">13%<br>36%<br>29%<br>22%</div>
<div class="a" style="left:1254px;top:801px;font-size:14px;line-height:19px;color:#b8c0e0">共 20498单 58.0手/单</div>

<div class="a" style="left:1422px;top:142px;width:40px;height:40px;background:#262b34;border-radius:4px 0 0 4px"></div>
<div class="a" style="left:1430px;top:143px;font-size:10px;color:#2ab0ff;line-height:18px">🠕︎</div>
<div class="a" style="left:1441px;top:143px;font-size:11px;color:#e8e8e8;line-height:18px">1.8</div>
<div class="a" style="left:1430px;top:163px;font-size:10px;color:#20c040;line-height:18px">🠗︎</div>
<div class="a" style="left:1441px;top:163px;font-size:11px;color:#e8e8e8;line-height:18px">39.7</div>
<svg class="a" style="left:1366px;top:130px" width="64" height="64">
<defs><linearGradient id="g" x1="0" y1="0" x2="0" y2="1"><stop offset="0" stop-color="#30d0c0"/><stop offset=".6" stop-color="#c0d040"/><stop offset="1" stop-color="#f08030"/></linearGradient></defs>
<circle cx="32" cy="32" r="30" fill="#2c313a" stroke="#40454e" stroke-width="2"/>
<path d="M32,6 A26,26 0 1 1 8,42" fill="none" stroke="url(#g)" stroke-width="2"/>
<text x="12" y="41" fill="#f0f0f0" font-family="Liberation Sans,sans-serif" font-size="25">78</text>
<text x="42" y="41" fill="#f0f0f0" font-family="Liberation Sans,sans-serif" font-size="11">%</text>
</svg>
</body></html>
